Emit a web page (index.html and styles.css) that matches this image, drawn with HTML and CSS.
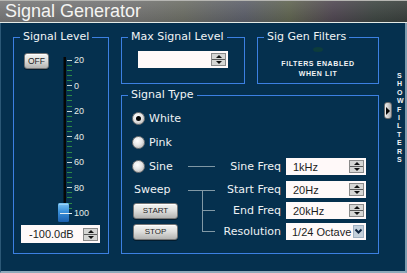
FILE: index.html
```html
<!DOCTYPE html>
<html>
<head>
<meta charset="utf-8">
<title>Signal Generator</title>
<link rel="stylesheet" href="styles.css">
</head>
<body>
<div class="window">
  <header class="titlebar">Signal Generator</header>
  <main class="panel">
    <div class="groups">
      <fieldset class="group level">
        <legend>Signal Level</legend>
        <div class="level-body">
          <button class="btn off">OFF</button>
          <svg class="slider" width="44" height="170" viewBox="0 0 44 170">
            <defs>
              <linearGradient id="thumb" x1="0" y1="0" x2="0" y2="1">
                <stop offset="0" stop-color="#7cc4f2"/>
                <stop offset="0.45" stop-color="#3a90da"/>
                <stop offset="1" stop-color="#1a5eae"/>
              </linearGradient>
            </defs>
            <rect x="7.5" y="4" width="2.5" height="156" fill="#060606"/>
            <g fill="#2c8a48">
              <rect x="11" y="12" width="5" height="1"/><rect x="11" y="17" width="5" height="1"/><rect x="11" y="22" width="5" height="1"/><rect x="11" y="27" width="5" height="1"/>
              <rect x="11" y="37" width="5" height="1"/><rect x="11" y="42" width="5" height="1"/><rect x="11" y="47" width="5" height="1"/><rect x="11" y="53" width="5" height="1"/>
              <rect x="11" y="63" width="5" height="1"/><rect x="11" y="68" width="5" height="1"/><rect x="11" y="73" width="5" height="1"/><rect x="11" y="78" width="5" height="1"/>
              <rect x="11" y="88" width="5" height="1"/><rect x="11" y="93" width="5" height="1"/><rect x="11" y="99" width="5" height="1"/><rect x="11" y="104" width="5" height="1"/>
              <rect x="11" y="114" width="5" height="1"/><rect x="11" y="119" width="5" height="1"/><rect x="11" y="124" width="5" height="1"/><rect x="11" y="129" width="5" height="1"/>
              <rect x="11" y="139" width="5" height="1"/><rect x="11" y="144" width="5" height="1"/><rect x="11" y="150" width="5" height="1"/><rect x="11" y="155" width="5" height="1"/>
            </g>
            <g fill="#c9d5cd">
              <rect x="11" y="7" width="5" height="1"/><rect x="11" y="32" width="5" height="1"/><rect x="11" y="58" width="5" height="1"/>
              <rect x="11" y="83" width="5" height="1"/><rect x="11" y="109" width="5" height="1"/><rect x="11" y="134" width="5" height="1"/>
            </g>
            <rect x="2" y="150" width="11" height="19" rx="1.5" fill="url(#thumb)"/>
            <rect x="3" y="151" width="9" height="1" fill="#a8dcff" opacity="0.7"/>
            <rect x="4" y="160" width="12" height="1" fill="#e6eef2"/>
            <g class="scale-text" fill="#e4ebe6">
              <text x="18" y="10.3">20</text>
              <text x="18" y="35.8">0</text>
              <text x="18" y="61.3">20</text>
              <text x="18" y="86.8">40</text>
              <text x="18" y="112.3">60</text>
              <text x="18" y="137.8">80</text>
              <text x="18" y="163.3">100</text>
            </g>
          </svg>
        </div>
        <div class="field level-value"><span class="val">-100.0dB</span><span class="spin"><i class="up"></i><i class="down"></i></span></div>
      </fieldset>

      <fieldset class="group max">
        <legend>Max Signal Level</legend>
        <div class="field max-field"><span class="val"></span><span class="spin"><i class="up"></i><i class="down"></i></span></div>
      </fieldset>

      <fieldset class="group filters">
        <legend>Sig Gen Filters</legend>
        <span class="led"></span>
        <p class="note">FILTERS ENABLED<br>WHEN LIT</p>
      </fieldset>

      <fieldset class="group type">
        <legend>Signal Type</legend>
        <div class="type-grid">
          <label class="opt wide"><span class="radio checked"></span>White</label>
          <label class="opt wide"><span class="radio"></span>Pink</label>
          <label class="opt"><span class="radio"></span>Sine</label>
          <span class="conn"></span>
          <span class="lbl">Sine Freq</span>
          <div class="field"><span class="val">1kHz</span><span class="spin"><i class="up"></i><i class="down"></i></span></div>

          <span class="sweep">Sweep</span>
          <svg class="bracket" width="27" height="63" viewBox="0 0 27 63">
            <g stroke="#8299a6" stroke-width="1" fill="none">
              <line x1="0" y1="11.5" x2="27" y2="11.5"/>
              <line x1="14.5" y1="11.5" x2="14.5" y2="53"/>
              <line x1="14.5" y1="31.5" x2="27" y2="31.5"/>
              <line x1="14.5" y1="52.5" x2="27" y2="52.5"/>
            </g>
          </svg>
          <span class="lbl">Start Freq</span>
          <div class="field"><span class="val">20Hz</span><span class="spin"><i class="up"></i><i class="down"></i></span></div>

          <button class="btn act">START</button>
          <span class="lbl">End Freq</span>
          <div class="field"><span class="val">20kHz</span><span class="spin"><i class="up"></i><i class="down"></i></span></div>

          <button class="btn act">STOP</button>
          <span class="lbl">Resolution</span>
          <div class="field select"><span class="val">1/24 Octave</span><span class="drop"><svg width="9" height="7" viewBox="0 0 9 7"><polyline points="1.5,1.5 4.5,4.5 7.5,1.5" fill="none" stroke="#0e2440" stroke-width="2"/></svg></span></div>
        </div>
      </fieldset>
    </div>

    <aside class="show">
      <button class="tab" aria-label="Show filters"></button>
      <div class="show-text">SHOW FILTERS</div>
    </aside>
  </main>
</div>
</body>
</html>
```

FILE: styles.css
```css
* { box-sizing: border-box; }

html, body {
  margin: 0;
  padding: 0;
  background: #05304e;
}

body {
  width: 407px;
  height: 273px;
  overflow: hidden;
  font-family: "DejaVu Sans", Verdana, sans-serif;
  font-size: 11px;
  color: #eef2f4;
}

.window {
  width: 407px;
  height: 273px;
  display: flex;
  flex-direction: column;
}

.titlebar {
  height: 23px;
  flex: none;
  padding-left: 5px;
  border-top: 1px solid #b6b6b2;
  border-bottom: 1px solid #e4eae6;
  background:
    linear-gradient(180deg, rgba(255,255,255,0.10), rgba(0,0,0,0.08)),
    linear-gradient(90deg, #777777 0%, #727272 32%, #6b6d64 45%, #5b5e69 60%, #5e634f 71%, #4e4550 82%, #3d4541 92%, #383e3b 100%);
  font-family: "Liberation Sans", Arial, sans-serif;
  font-size: 18px;
  line-height: 21px;
  color: #f4f4f2;
}

.panel {
  flex: 1;
  display: flex;
  padding: 7px 0 17px 12px;
  border-left: 1px solid #2c5876;
  border-right: 2px solid #7e9caf;
  border-bottom: 2px solid #8eaabb;
}

.groups {
  display: grid;
  grid-template-columns: 96px 124px 122px;
  grid-template-rows: 54px 166px;
  column-gap: 12px;
  row-gap: 4px;
}

fieldset.group {
  margin: 0;
  padding: 0;
  min-width: 0;
  border: 1px solid #3c80e2;
}

legend {
  margin-left: 6px;
  padding: 0 3px;
  font-size: 11px;
  line-height: 14px;
  color: #f0f4f6;
}

.level { grid-row: 1 / 3; }
.type { grid-column: 2 / 4; border-color: #3a72b0; }

/* Signal level */
.level-body {
  display: flex;
  align-items: flex-start;
  margin-top: 9px;
  padding-left: 10px;
}

.slider { margin-left: 7px; display: block; }
.scale-text { font-family: "Liberation Sans", Arial, sans-serif; font-size: 9px; }

.btn {
  padding: 0;
  font-family: "Liberation Sans", Arial, sans-serif;
  font-size: 8px;
  color: #1c1c1c;
  background: linear-gradient(180deg, #f6f6f4 0%, #dcdcda 50%, #b4b4b2 100%);
  border: 1px solid #767676;
  border-radius: 3px;
  box-shadow: inset 0 1px 0 #ffffff, 0 1px 0 rgba(0,0,0,0.4);
}

.off { width: 25px; height: 16px; font-size: 8.5px; }

.field {
  display: flex;
  align-items: center;
  height: 17px;
  background: #fff9f9;
  font-family: "Liberation Sans", Arial, sans-serif;
  font-size: 11px;
  color: #1c1c1c;
}

.val { padding-left: 7px; white-space: nowrap; }

.level-value {
  width: 79px;
  height: 18px;
  margin: 2px 0 0 7px;
}
.level-value .val { padding-left: 8px; }

.spin {
  margin-left: auto;
  margin-right: 2px;
  width: 15px;
  height: 13px;
  display: flex;
  flex-direction: column;
  border: 1px solid #8a8a8a;
  background: #d6d6d4;
}

.spin i {
  flex: 1;
  display: flex;
  align-items: center;
  justify-content: center;
}
.spin i + i { border-top: 1px solid #5a5a5a; }

.spin i::after {
  content: "";
  border-left: 3.5px solid transparent;
  border-right: 3.5px solid transparent;
}
.spin .up::after { border-bottom: 3px solid #111; }
.spin .down::after { border-top: 3px solid #111; }

/* Max signal level */
.max-field {
  width: 90px;
  margin: 7px 0 0 16px;
}

/* Filters */
.led {
  display: block;
  width: 10px;
  height: 5px;
  margin: 3px auto 0;
  border-radius: 50%;
  background: #0d3c3c;
}

.note {
  margin: 7px 0 0;
  text-align: center;
  font-family: "Liberation Sans", Arial, sans-serif;
  font-weight: bold;
  font-size: 7px;
  line-height: 10px;
  letter-spacing: 0.6px;
  color: #f2f4f6;
}

/* Signal type */
.type-grid {
  display: grid;
  grid-template-columns: 57px 27px 1fr 80px;
  grid-template-rows: 24px 24px 25px 21px 21px 21px;
  align-items: center;
  margin: 4px 12px 0 9px;
}

.opt {
  display: flex;
  align-items: center;
  gap: 4px;
}
.opt.wide { grid-column: 1 / -1; }

.radio {
  width: 13px;
  height: 13px;
  margin-left: 1px;
  border-radius: 50%;
  border: 1px solid #7a7a7a;
  background: radial-gradient(circle at 40% 35%, #ffffff 0%, #e6e6e6 45%, #a9a9a9 100%);
  display: flex;
  align-items: center;
  justify-content: center;
}
.radio.checked::after {
  content: "";
  width: 5px;
  height: 5px;
  border-radius: 50%;
  background: #050505;
}

.conn {
  height: 1px;
  background: #7f97a4;
}

.lbl {
  text-align: right;
  padding-right: 5px;
  white-space: nowrap;
}

.sweep { padding-left: 3px; }

.bracket {
  grid-row: span 3;
  align-self: start;
  display: block;
}

.act {
  width: 45px;
  height: 16px;
  margin-left: 2px;
}

.drop {
  margin-left: auto;
  margin-right: 2px;
  width: 11px;
  height: 13px;
  background: #c3cfdb;
  border: 1px solid #9fb0c2;
  display: flex;
  align-items: center;
  justify-content: center;
}
.drop svg { display: block; }
.select .val { padding-left: 6px; }

/* Show filters strip */
.show {
  flex: 1;
  display: flex;
  align-items: flex-start;
  padding-left: 5px;
  gap: 3px;
}

.tab {
  width: 8px;
  height: 17px;
  margin-top: 72px;
  padding: 0;
  border: 1px solid #6c6c6c;
  border-radius: 3px;
  background: linear-gradient(90deg, #f0f0f0, #b0b0b0);
  display: flex;
  align-items: center;
  justify-content: center;
}
.tab::after {
  content: "";
  border-left: 4px solid #050505;
  border-top: 4px solid transparent;
  border-bottom: 4px solid transparent;
}

.show-text {
  width: 4px;
  margin: 42px 0 0 2px;
  word-break: break-all;
  text-align: center;
  font-family: "Liberation Sans", Arial, sans-serif;
  font-weight: bold;
  font-size: 7px;
  line-height: 8.4px;
  color: #f2f4f6;
}
```
